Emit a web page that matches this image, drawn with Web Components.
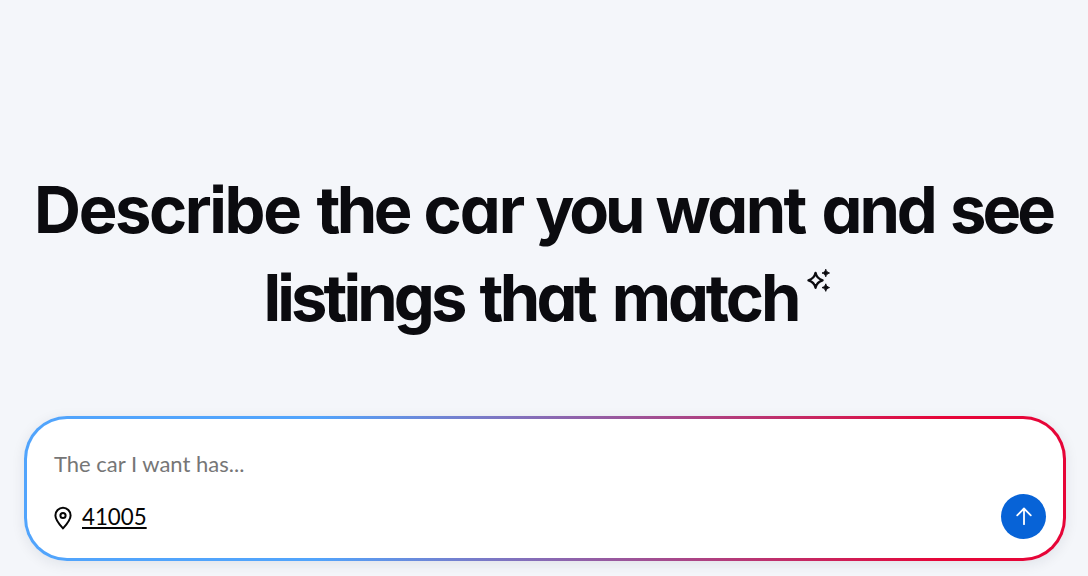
<!DOCTYPE html>
<html lang="en">
<head>
<meta charset="utf-8">
<title>Car search</title>
<style>
  body {
    margin: 0;
    height: 576px;
    overflow: hidden;
    background: #f4f6fa;
    color: #0b0b0f;
    font-family: Lato, "Liberation Sans", sans-serif;
  }
</style>
</head>
<body>
<search-hero>
  <hero-title slot="title">
    <title-line><title-word track="-2.4" gap="4">Describe </title-word><title-word track="-3.6" gap="3">the </title-word><title-word track="-2.1" gap="-1">car </title-word><title-word track="-4" gap="2.6">you </title-word><title-word track="-2.6" gap="4">want </title-word><title-word track="-3.1" gap="3">and </title-word><title-word track="-4">see</title-word></title-line>
    <title-line style="--indent: 10px"><title-word track="-3.9" gap="4.7">listings </title-word><title-word track="-3.7" gap="6">that </title-word><title-word track="-3.1">match</title-word><sparkle-icon></sparkle-icon></title-line>
  </hero-title>
  <prompt-box>
    <span slot="placeholder">The car I want has...</span>
    <zip-link slot="location">41005</zip-link>
    <send-button slot="action"></send-button>
  </prompt-box>
</search-hero>

<script>
/**
 * Shared base: renders the html getter into an open shadow root.
 */
class BaseElement extends HTMLElement {
  constructor() {
    super();
    this.template = document.createElement("template");
    this.attachShadow({ mode: "open" });
    this.render();
  }

  render() {
    this.template.innerHTML = this.html;
    this.shadowRoot.appendChild(this.template.content.cloneNode(true));
  }
}

/**
 * `search-hero`
 * `page column with the title above the prompt`
 */
class SearchHero extends BaseElement {
  get html() {
    return `
<style>
:host {
  display: flex;
  flex-direction: column;
  box-sizing: border-box;
  height: 576px;
  padding: 166px 22px 0 24px;
  gap: 74px;
}
</style>
<slot name="title"></slot>
<slot></slot>`;
  }
}
window.customElements.define("search-hero", SearchHero);

/**
 * `hero-title`
 * `bold two line headline`
 */
class HeroTitle extends BaseElement {
  get html() {
    return `
<style>
:host {
  display: flex;
  flex-direction: column;
  align-items: center;
  padding-right: 4px;
  font: 700 65px/88px Inter, "Liberation Sans", sans-serif;
  font-feature-settings: "cv11", "ss07";
}
</style>
<slot></slot>`;
  }
}
window.customElements.define("hero-title", HeroTitle);

class TitleLine extends BaseElement {
  get html() {
    return `
<style>
:host {
  display: flex;
  height: 88px;
  padding-left: var(--indent, 0);
}
</style>
<slot></slot>`;
  }
}
window.customElements.define("title-line", TitleLine);

/**
 * `title-word`
 * `one headline word, track and gap are its letter and word spacing in px`
 */
class TitleWord extends BaseElement {
  // white-space is preserved here, so the slot follows the style directly
  get html() {
    return `<style>
:host {
  display: block;
  white-space: pre;
  letter-spacing: ${this.getAttribute("track") || 0}px;
  word-spacing: ${this.getAttribute("gap") || 0}px;
}
</style><slot></slot>`;
  }
}
window.customElements.define("title-word", TitleWord);

/**
 * `sparkle-icon`
 * `outlined star with two small solid ones`
 */
class SparkleIcon extends BaseElement {
  get html() {
    return `
<style>
:host {
  display: block;
  padding: 14px 0 0 9px;
}
svg {
  display: block;
}
</style>
<svg width="25" height="25" viewBox="0 0 24 24" fill="#0b0b0f">
  <path d="M8.2 4.6C9 8.6 10.6 10.5 15 11.8C10.6 13.1 9 15 8.2 19C7.4 15 5.8 13.1 1.4 11.8C5.8 10.5 7.4 8.6 8.2 4.6Z" fill="none" stroke="#0b0b0f" stroke-width="2.2" stroke-linejoin="round"/>
  <g stroke="#0b0b0f" stroke-width=".9" stroke-linejoin="round">
    <path d="M18 1.2C18.6 3.3 19.4 4.1 21.6 4.8C19.4 5.5 18.6 6.3 18 8.4C17.4 6.3 16.6 5.5 14.4 4.8C16.6 4.1 17.4 3.3 18 1.2Z"/>
    <path d="M18 15.2C18.6 17.3 19.4 18.1 21.6 18.8C19.4 19.5 18.6 20.3 18 22.4C17.4 20.3 16.6 19.5 14.4 18.8C16.6 18.1 17.4 17.3 18 15.2Z"/>
  </g>
</svg>`;
  }
}
window.customElements.define("sparkle-icon", SparkleIcon);

/**
 * `prompt-box`
 * `rounded card with a gradient outline`
 */
class PromptBox extends BaseElement {
  get html() {
    return `
<style>
:host {
  display: flex;
  flex-direction: column;
  box-sizing: border-box;
  height: 145px;
  padding: 31px 17px 0 27px;
  border: 3px solid transparent;
  border-radius: 43px;
  background:
    linear-gradient(#fff, #fff) padding-box,
    linear-gradient(90deg, #51a4fc 0%, #51a4fc 28%, #e60538 88%, #e60538 100%) border-box;
  box-shadow: 0 3px 14px rgba(20, 30, 60, .09);
}
.placeholder {
  height: 28px;
  font-size: 22px;
  line-height: 28px;
  color: #767676;
}
.row {
  display: flex;
  align-items: center;
  justify-content: space-between;
  height: 46px;
  margin-top: 15px;
}
</style>
<div class="placeholder"><slot name="placeholder"></slot></div>
<div class="row">
  <slot name="location"></slot>
  <slot name="action"></slot>
</div>`;
  }
}
window.customElements.define("prompt-box", PromptBox);

/**
 * `zip-link`
 * `map pin and underlined zip code`
 */
class ZipLink extends BaseElement {
  get html() {
    return `
<style>
:host {
  display: flex;
  align-items: center;
  gap: 10px;
  padding-top: 2px;
  font-size: 22.3px;
  line-height: 28px;
  color: #050505;
}
svg {
  margin-top: 1px;
}
span {
  text-decoration: underline;
  text-decoration-thickness: 2px;
  text-underline-offset: 2px;
}
</style>
<svg width="18" height="24" viewBox="0 0 18 24" fill="none" stroke="#050505" stroke-width="2">
  <path d="M9 22.4C5.2 18.2 1.4 13.5 1.4 9.4A7.6 7.6 0 0 1 16.6 9.4C16.6 13.5 12.8 18.2 9 22.4Z" stroke-linejoin="round"/>
  <circle cx="9" cy="9.5" r="2.6"/>
</svg>
<span><slot></slot></span>`;
  }
}
window.customElements.define("zip-link", ZipLink);

/**
 * `send-button`
 * `blue circle with an up arrow`
 */
class SendButton extends BaseElement {
  get html() {
    return `
<style>
:host {
  display: flex;
  align-items: center;
  justify-content: center;
  width: 45px;
  height: 45px;
  border-radius: 50%;
  background: #0763d7;
}
</style>
<svg width="18" height="20" viewBox="0 0 18 20" fill="none" stroke="#fff" stroke-width="1.8" stroke-linecap="round" stroke-linejoin="round">
  <path d="M9 18.2V2.5M2.2 9.3L9 2.5L15.8 9.3"/>
</svg>`;
  }
}
window.customElements.define("send-button", SendButton);
</script>
</body>
</html>
